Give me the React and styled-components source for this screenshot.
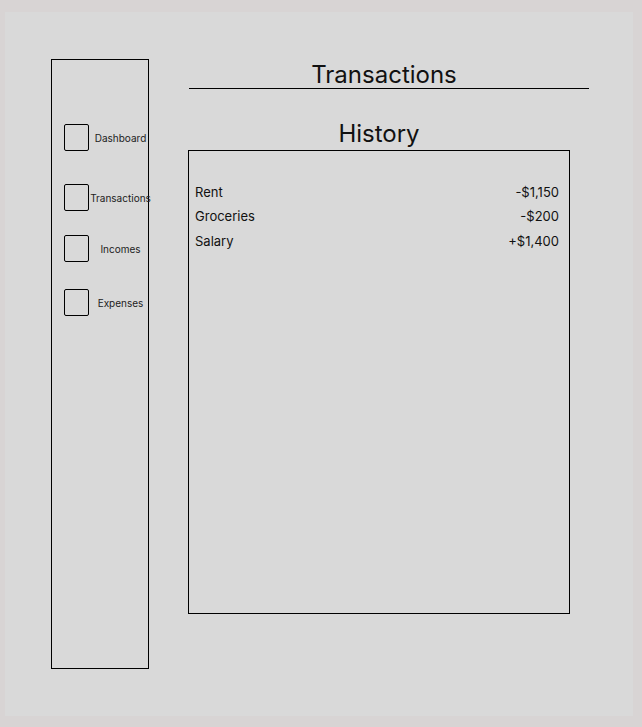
import React from 'react';
import styled, { createGlobalStyle } from 'styled-components';

const Global = createGlobalStyle`
  html, body {
    margin: 0;
    padding: 0;
    background: #d8d4d4;
    font-family: Inter, "Noto Sans", sans-serif;
    color: #111;
  }
`;

const Frame = styled.div`
  margin: 12px 9px 11px 5px;
  height: 704px;
  background: #d9d9d9;
  display: flex;
  align-items: flex-start;
  padding: 47px 0 0 46px;
  box-sizing: border-box;
`;

const Sidebar = styled.nav`
  width: 98px;
  height: 610px;
  box-sizing: border-box;
  border: 1px solid #000;
  display: flex;
  flex-direction: column;
  padding-left: 12px;
`;

const NavItem = styled.div`
  display: flex;
  align-items: center;
  margin-top: ${p => p.$top}px;
  height: 27px;
`;

const Box = styled.span`
  width: 25px;
  height: 27px;
  box-sizing: border-box;
  border: 1px solid #000;
  border-radius: 2px;
  flex: none;
`;

const NavLabel = styled.span`
  flex: 1;
  margin-right: -4px;
  text-align: center;
  font-size: 10px;
  color: #222;
  white-space: nowrap;
`;

const Main = styled.main`
  width: 400px;
  margin: 1px 0 0 40px;
  display: flex;
  flex-direction: column;
`;

const Title = styled.h1`
  margin: 0;
  padding: 2px 10px 0 0;
  font-size: 24px;
  font-weight: 400;
  line-height: 26px;
  text-align: center;
  border-bottom: 1px solid #000;
`;

const SubTitle = styled.h2`
  margin: 31px 0 2px -1px;
  width: 382px;
  font-size: 24px;
  font-weight: 400;
  line-height: 28px;
  text-align: center;
`;

const HistoryBox = styled.section`
  width: 382px;
  height: 464px;
  margin-left: -1px;
  box-sizing: border-box;
  border: 1px solid #000;
  padding: 29px 10px 0 6px;
`;

const Row = styled.div`
  display: flex;
  justify-content: space-between;
  font-size: 13px;
  line-height: 24.3px;
`;

const nav = [
  { label: 'Dashboard', top: 64 },
  { label: 'Transactions', top: 33 },
  { label: 'Incomes', top: 24 },
  { label: 'Expenses', top: 27 },
];

const history = [
  { name: 'Rent', amount: '-$1,150' },
  { name: 'Groceries', amount: '-$200' },
  { name: 'Salary', amount: '+$1,400' },
];

export default function App() {
  return (
    <>
      <Global />
      <Frame>
        <Sidebar>
          {nav.map(n => (
            <NavItem key={n.label} $top={n.top}>
              <Box />
              <NavLabel>{n.label}</NavLabel>
            </NavItem>
          ))}
        </Sidebar>
        <Main>
          <Title>Transactions</Title>
          <SubTitle>History</SubTitle>
          <HistoryBox>
            {history.map(h => (
              <Row key={h.name}>
                <span>{h.name}</span>
                <span>{h.amount}</span>
              </Row>
            ))}
          </HistoryBox>
        </Main>
      </Frame>
    </>
  );
}
